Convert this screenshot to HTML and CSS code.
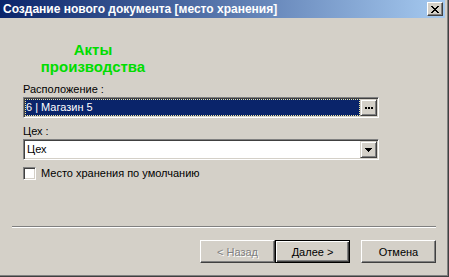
FILE: index.html
```html
<!DOCTYPE html>
<html lang="ru">
<head>
  <meta charset="UTF-8">
  <meta name="viewport" content="width=device-width, initial-scale=1.0">
  <title>Создание нового документа</title>
  <link rel="stylesheet" href="styles.css">
</head>
<body>
  <div class="window">
    <div class="titlebar">
      <span class="title">Создание нового документа [место хранения]</span>
      <button class="close-btn" type="button">
        <svg width="8" height="7" viewBox="0 0 8 7" shape-rendering="crispEdges">
          <path d="M0 0h2v1h-2zM6 0h2v1h-2zM1 1h2v1h-2zM5 1h2v1h-2zM2 2h4v1h-4zM3 3h2v1h-2zM2 4h4v1h-4zM1 5h2v1h-2zM5 5h2v1h-2zM0 6h2v1h-2zM6 6h2v1h-2z" fill="#000"/>
        </svg>
      </button>
    </div>

    <div class="content">
      <div class="heading">Акты<br>производства</div>

      <div class="field-label">Расположение :</div>
      <div class="field">
        <div class="field-value selected"><span class="focus">6 | Магазин 5</span></div>
        <div class="field-btn">
          <svg width="8" height="2" viewBox="0 0 8 2" shape-rendering="crispEdges">
            <path d="M0 0h2v2h-2zM3 0h2v2h-2zM6 0h2v2h-2z" fill="#000"/>
          </svg>
        </div>
      </div>

      <div class="field-label">Цех :</div>
      <div class="field">
        <div class="field-value">Цех</div>
        <div class="field-btn">
          <svg width="7" height="4" viewBox="0 0 7 4" shape-rendering="crispEdges">
            <path d="M0 0h7v1h-7zM1 1h5v1h-5zM2 2h3v1h-3zM3 3h1v1h-1z" fill="#000"/>
          </svg>
        </div>
      </div>

      <label class="check">
        <span class="check-box"></span>
        <span>Место хранения по умолчанию</span>
      </label>
    </div>

    <div class="footer">
      <div class="separator"></div>
      <div class="buttons">
        <button class="btn btn-disabled" type="button">&lt; Назад</button>
        <button class="btn btn-default" type="button">Далее &gt;</button>
        <button class="btn btn-cancel" type="button">Отмена</button>
      </div>
    </div>
  </div>
</body>
</html>
```

FILE: styles.css
```css
body {
  margin: 0;
  padding: 0;
  background-color: #d4d0c8;
  font-family: "Liberation Sans", Arial, sans-serif;
  font-size: 11px;
  color: #000;
}

.window {
  box-sizing: border-box;
  width: 449px;
  height: 277px;
  display: flex;
  flex-direction: column;
  background-color: #d4d0c8;
  border-right: 1px solid #404040;
  border-bottom: 1px solid #404040;
  box-shadow: inset -1px -1px 0 #808080;
  padding: 0 3px 3px 0;
}

/* заголовок окна */
.titlebar {
  height: 18px;
  display: flex;
  align-items: center;
  justify-content: space-between;
  padding: 0 2px 0 3px;
  background: linear-gradient(to right, #0a246a, #a6caf0);
}

.title {
  color: #fff;
  font-family: "Liberation Sans", Arial, sans-serif;
  font-weight: bold;
  font-size: 12px;
  line-height: 18px;
  white-space: nowrap;
}

.close-btn {
  box-sizing: border-box;
  width: 16px;
  height: 14px;
  padding: 0;
  margin: 0;
  display: flex;
  align-items: center;
  justify-content: center;
  background-color: #d4d0c8;
  border: 1px solid;
  border-color: #fff #404040 #404040 #fff;
  box-shadow: inset -1px -1px 0 #808080;
}

.content {
  flex: 1;
  padding: 23px 0 0 23px;
}

.heading {
  width: 140px;
  text-align: center;
  color: #00dd00;
  font-weight: bold;
  font-size: 15px;
  line-height: 17px;
}

.field-label {
  margin-top: 8px;
  line-height: 13px;
}

.field-label + .field {
  margin-top: 1px;
}

.field + .field-label {
  margin-top: 7px;
}

/* поле со вдавленной рамкой */
.field {
  box-sizing: border-box;
  width: 356px;
  height: 21px;
  display: flex;
  background-color: #fff;
  border: 1px solid;
  border-color: #808080 #fff #fff #808080;
  box-shadow: inset 1px 1px 0 #404040, inset -1px -1px 0 #d4d0c8;
  padding: 1px;
}

.field-value {
  flex: 1;
  display: flex;
  align-items: center;
  padding-left: 2px;
  line-height: 13px;
}

.field-value.selected {
  padding: 0;
  background-color: #0a246a;
  color: #fff;
  outline: 1px dotted #f0e8a0;
  outline-offset: -1px;
}

.field-value.selected .focus {
  padding-left: 1px;
}

.field-btn {
  box-sizing: border-box;
  width: 17px;
  display: flex;
  align-items: center;
  justify-content: center;
  background-color: #d4d0c8;
  border: 1px solid;
  border-color: #d4d0c8 #404040 #404040 #d4d0c8;
  box-shadow: inset 1px 1px 0 #fff, inset -1px -1px 0 #808080;
}

.check {
  margin-top: 7px;
  display: flex;
  align-items: center;
  line-height: 13px;
}

.check-box {
  box-sizing: border-box;
  width: 13px;
  height: 13px;
  margin-right: 5px;
  background-color: #fff;
  border: 1px solid;
  border-color: #808080 #fff #fff #808080;
  box-shadow: inset 1px 1px 0 #404040, inset -1px -1px 0 #d4d0c8;
}

.footer {
  padding: 0 9px 10px 12px;
}

.separator {
  height: 1px;
  background-color: #808080;
  border-bottom: 1px solid #fff;
}

.buttons {
  margin-top: 12px;
  display: flex;
  justify-content: flex-end;
}

.btn {
  box-sizing: border-box;
  width: 75px;
  height: 23px;
  padding: 0;
  margin: 0;
  font-family: "Liberation Sans", Arial, sans-serif;
  font-size: 11px;
  color: #000;
  background-color: #d4d0c8;
  border: 1px solid;
  border-color: #fff #404040 #404040 #fff;
  box-shadow: inset -1px -1px 0 #808080;
}

.btn-disabled {
  color: #808080;
  text-shadow: 1px 1px 0 #fff;
}

.btn-default {
  border: 1px solid #000;
  box-shadow: inset 1px 1px 0 #fff, inset -1px -1px 0 #404040, inset -2px -2px 0 #808080;
}

.btn-cancel {
  margin-left: 11px;
}
```
